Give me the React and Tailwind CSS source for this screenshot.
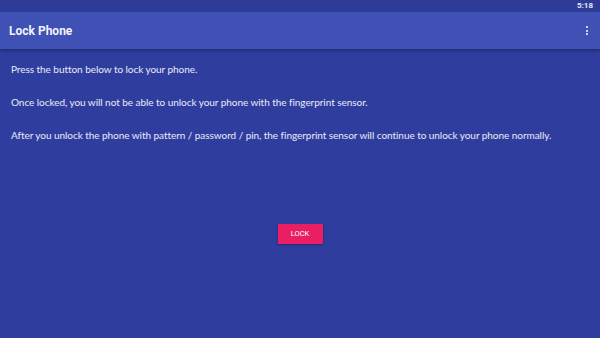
import React from 'react';

export default function App() {
    return (
        <div className="w-[600px] h-[338px] flex flex-col bg-[#2f3d9e] overflow-hidden" style={{ fontFamily: 'Lato, "Open Sans", sans-serif' }}>
            <div className="h-[12px] bg-[#2e3b99] flex items-center justify-end pr-[7px]">
                <span className="text-[8px] leading-none text-white/90 font-bold" style={{ fontFamily: 'Roboto, sans-serif' }}>5:18</span>
            </div>
            <div className="h-[37px] bg-[#3f51b5] flex items-center justify-between pl-[9px] pr-[12px] shadow-[0_2px_3px_rgba(0,0,0,0.25)] relative z-10">
                <span className="text-[12px] font-bold text-white/95" style={{ fontFamily: 'Roboto, sans-serif' }}>Lock Phone</span>
                <div className="flex flex-col gap-[1.5px]">
                    <span className="w-[2px] h-[2px] rounded-full bg-white" />
                    <span className="w-[2px] h-[2px] rounded-full bg-white" />
                    <span className="w-[2px] h-[2px] rounded-full bg-white" />
                </div>
            </div>
            <div className="flex-1 flex flex-col px-[11px] pt-[13px] text-[10px] leading-[14px] text-white/90 gap-[19px] tracking-[-0.05px]">
                <p>Press the button below to lock your phone.</p>
                <p>Once locked, you will not be able to unlock your phone with the fingerprint sensor.</p>
                <p>After you unlock the phone with pattern / password / pin, the fingerprint sensor will continue to unlock your phone normally.</p>
                <div className="flex justify-center mt-[63px]">
                    <button className="w-[45px] h-[20px] bg-[#e91e63] text-white text-[7.5px] shadow-[0_1px_2px_rgba(0,0,0,0.3)]" style={{ fontFamily: 'Roboto, sans-serif' }}>LOCK</button>
                </div>
            </div>
        </div>
    );
}
